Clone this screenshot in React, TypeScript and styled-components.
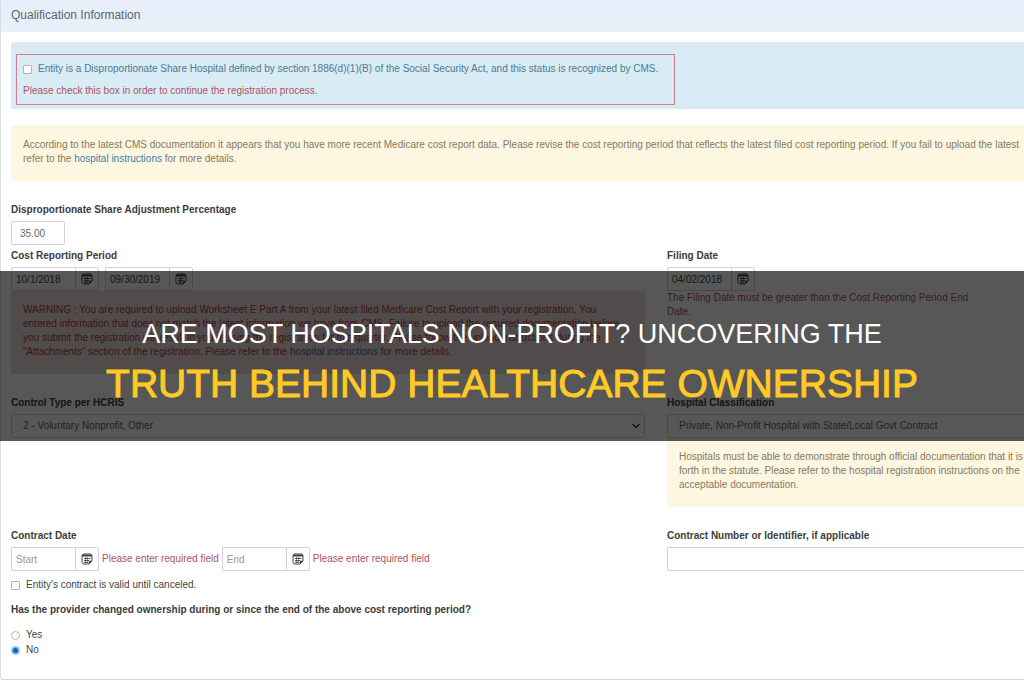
import React from 'react';
import styled, { createGlobalStyle } from 'styled-components';

const GlobalStyle = createGlobalStyle`
  *, *::before, *::after { box-sizing: border-box; }
  body {
    margin: 0;
    background: #fff;
    color: #444;
    font: 10px/14px "Liberation Sans", Arial, sans-serif;
  }
  input, select, button { font: inherit; margin: 0; }
`;

const Page = styled.div`
  position: relative;
  overflow: hidden;
`;

const Panel = styled.section`
  border-left: 1px solid #dcdfe2;
  border-bottom: 1px solid #d8d8d8;
  border-bottom-left-radius: 3px;
`;

const PanelHeader = styled.h1`
  margin: 0;
  padding: 7px 10px 9px;
  background: linear-gradient(#e7eefa, #e7f1f9);
  color: #5b6572;
  font-size: 12px;
  font-weight: 400;
  line-height: 16px;
`;

const PanelBody = styled.form`
  display: flex;
  flex-direction: column;
  padding: 10px 0 22px 10px;
`;

const InfoBox = styled.div`
  padding: 12px 5px 4px;
  background: #d9ebf5;
  border-radius: 2px 0 0 2px;
`;

const RequiredFrame = styled.div`
  display: inline-flex;
  flex-direction: column;
  gap: 8px;
  padding: 7px 16px 6px 6px;
  border: 1px solid #cf7f8b;
  vertical-align: top;
`;

const tones = {
  warning: { background: '#fdf6e1', color: '#857a5f' },
  danger: { background: '#f0dcdc', color: '#a94442' },
};

const Notice = styled.p<{ $tone: keyof typeof tones }>`
  margin: 0;
  padding: 12px 12px 15px;
  overflow: hidden;
  white-space: nowrap;
  border-radius: 2px;
  background: ${({ $tone }) => tones[$tone].background};
  color: ${({ $tone }) => tones[$tone].color};
`;

const PageNotice = styled(Notice)`
  margin: 16px 0 22px;
  padding-top: 13px;
`;

const Link = styled.a`
  color: #3d7ea6;
  text-decoration: none;
`;

const DangerLink = styled(Link)`
  color: #2b6fb0;
`;

const ErrorText = styled.span`
  color: #ab5560;
`;

const FieldError = styled(ErrorText)`
  max-width: 320px;
`;

const Columns = styled.div`
  display: grid;
  grid-template-columns: minmax(0, 634fr) minmax(0, 357fr);
  column-gap: 22px;
  margin-bottom: 22px;
`;

const LastColumns = styled(Columns)`
  margin-bottom: 11px;
`;

const Column = styled.div`
  display: flex;
  flex-direction: column;
`;

const Label = styled.label`
  margin-bottom: 4px;
  color: #3c3c3c;
  font-weight: 700;
`;

const TextInput = styled.input`
  height: 24px;
  padding: 0 8px;
  border: 1px solid #d2d2d2;
  border-radius: 2px;
  background: #fff;
  color: #666;
  &::placeholder { color: #999; opacity: 1; }
`;

const PercentInput = styled(TextInput)`
  width: 54px;
  margin-bottom: 4px;
`;

const OpenTextInput = styled(TextInput)`
  border-right: 0;
  border-radius: 2px 0 0 2px;
`;

const DateRow = styled.div<{ $gap: number }>`
  display: flex;
  align-items: center;
  gap: ${({ $gap }) => $gap}px;
`;

const DateGroup = styled.span`
  display: flex;
`;

const DateInput = styled(TextInput)`
  width: 64px;
  padding: 0 4px;
  border-right: 0;
  border-radius: 2px 0 0 2px;
  color: #444;
`;

const DateButton = styled.button`
  display: flex;
  align-items: center;
  justify-content: center;
  width: 24px;
  height: 24px;
  padding: 0;
  border: 1px solid #d2d2d2;
  border-radius: 0 2px 2px 0;
  background: #fff;
  color: #444;
`;

const SelectWrap = styled.div`
  position: relative;
  display: flex;
`;

const Select = styled.select<{ $open?: boolean }>`
  appearance: none;
  flex: 1;
  min-width: 0;
  height: 24px;
  padding: 0 11px;
  border: 1px solid #d2d2d2;
  border-right-width: ${({ $open }) => ($open ? 0 : 1)}px;
  border-radius: 2px;
  background: #fff;
  color: #666;
`;

const Chevron = styled.svg`
  position: absolute;
  top: 8px;
  right: 4px;
  pointer-events: none;
`;

const Choice = styled.label`
  display: flex;
  align-items: center;
  gap: 6px;
`;

const InfoChoice = styled(Choice)`
  color: #4a7b90;
`;

const ContractChoice = styled(Choice)`
  margin-top: 7px;
`;

const Tick = styled.input`
  appearance: none;
  width: 9px;
  height: 9px;
  border: 1px solid #b5b5b5;
  border-radius: 1px;
  background: #fff;
`;

const Radio = styled(Tick)`
  border-radius: 50%;
  &:checked {
    border-color: #7fb2f0;
    background: radial-gradient(circle, #0b62d6 0 2px, #fff 4px);
  }
`;

const Question = styled.fieldset`
  display: flex;
  flex-direction: column;
  gap: 1px;
  margin: 0;
  padding: 0;
  border: 0;
`;

const Legend = styled.legend`
  margin-bottom: 11px;
  padding: 0;
  color: #3c3c3c;
  font-weight: 700;
`;

const Banner = styled.div`
  position: absolute;
  top: 271px;
  left: 0;
  right: 0;
  padding: 47px 0 33px;
  background: rgba(0, 0, 0, 0.66);
  text-align: center;
  white-space: nowrap;
`;

const BannerTitle = styled.h2`
  margin: 0;
  color: #fff;
  font-size: 27px;
  font-weight: 400;
  line-height: 32px;
`;

const BannerSubtitle = styled.p`
  margin: 10px 0 0;
  color: #ffc926;
  font-size: 39px;
  line-height: 48px;
  -webkit-text-stroke: 1px #ffc926;
`;

const CalendarIcon = () => (
  <svg width="12" height="12" viewBox="0 0 12 12" fill="none" stroke="currentColor" aria-hidden="true">
    <path d="M1 3.2C1 1.9 1.7 1 3 1h6c1.300 0 2 .9 2 2.200V8l-3 3H3c-1.300 0-2-.8-2-2z" />
    <path d="M1 2.500h10" strokeWidth="2" />
    <path d="M3 5.500h6.500M3 7.500h5M3 9.400h3.500" strokeWidth=".9" />
    <path d="M4.500 4v6M6.500 4v6" strokeWidth=".6" />
    <path d="M8 11V8h3z" fill="currentColor" strokeWidth=".5" />
  </svg>
);

interface DateFieldProps {
  id?: string;
  name: string;
  value?: string;
  placeholder?: string;
}

const DateField = ({ id, name, value, placeholder }: DateFieldProps) => (
  <DateGroup>
    <DateInput id={id} type="text" aria-label={name} defaultValue={value} placeholder={placeholder} />
    <DateButton type="button" aria-label={`Choose ${name}`}>
      <CalendarIcon />
    </DateButton>
  </DateGroup>
);

export default function App() {
  return (
    <Page>
      <GlobalStyle />
      <Panel>
        <PanelHeader>Qualification Information</PanelHeader>
        <PanelBody>
          <InfoBox>
            <RequiredFrame>
              <InfoChoice>
                <Tick type="checkbox" />
                Entity is a Disproportionate Share Hospital defined by section 1886(d)(1)(B) of the Social
                Security Act, and this status is recognized by CMS.
              </InfoChoice>
              <ErrorText>Please check this box in order to continue the registration process.</ErrorText>
            </RequiredFrame>
          </InfoBox>

          <PageNotice $tone="warning">
            According to the latest CMS documentation it appears that you have more recent Medicare cost report
            data. Please revise the cost reporting period that reflects the latest filed cost reporting period. If
            you fail to upload the latest
            <br />
            refer to the <Link href="#instructions">hospital instructions</Link> for more details.
          </PageNotice>

          <Label htmlFor="percentage">Disproportionate Share Adjustment Percentage</Label>
          <PercentInput id="percentage" type="text" defaultValue="35.00" />

          <Columns>
            <Column>
              <Label htmlFor="period-start">Cost Reporting Period</Label>
              <DateRow $gap={6}>
                <DateField id="period-start" name="period start" value="10/1/2018" />
                <DateField name="period end" value="09/30/2019" />
              </DateRow>
              <Notice $tone="danger">
                WARNING : You are required to upload Worksheet E Part A from your latest filed Medicare Cost
                Report with your registration. You
                <br />
                entered information that does not match the latest information we have from CMS. Failure to upload
                the required documentation before
                <br />
                you submit the registration will result in you missing the registration for this quarter. Please
                follow the upload instructions during the
                <br />
                “Attachments” section of the registration. Please refer to the{' '}
                <DangerLink href="#instructions">hospital instructions</DangerLink> for more details.
              </Notice>
            </Column>
            <Column>
              <Label htmlFor="filing-date">Filing Date</Label>
              <DateField id="filing-date" name="filing date" value="04/02/2018" />
              <FieldError>The Filing Date must be greater than the Cost Reporting Period End Date.</FieldError>
            </Column>
          </Columns>

          <Columns>
            <Column>
              <Label htmlFor="control-type">Control Type per HCRIS</Label>
              <SelectWrap>
                <Select id="control-type">
                  <option>2 - Voluntary Nonprofit, Other</option>
                </Select>
                <Chevron width="10" height="8" viewBox="0 0 10 8" fill="none" stroke="#333" strokeWidth="1.300">
                  <path d="M1.500 2 5 5.500 8.500 2" />
                </Chevron>
              </SelectWrap>
            </Column>
            <Column>
              <Label htmlFor="classification">Hospital Classification</Label>
              <SelectWrap>
                <Select id="classification" $open>
                  <option>Private, Non-Profit Hospital with State/Local Govt Contract</option>
                </Select>
              </SelectWrap>
              <Notice $tone="warning">
                Hospitals must be able to demonstrate through official documentation that it is
                <br />
                forth in the statute. Please refer to the hospital registration instructions on the
                <br />
                acceptable documentation.
              </Notice>
            </Column>
          </Columns>

          <LastColumns>
            <Column>
              <Label htmlFor="contract-start">Contract Date</Label>
              <DateRow $gap={3}>
                <DateField id="contract-start" name="contract start" placeholder="Start" />
                <ErrorText>Please enter required field</ErrorText>
                <DateField name="contract end" placeholder="End" />
                <ErrorText>Please enter required field</ErrorText>
              </DateRow>
              <ContractChoice>
                <Tick type="checkbox" />
                Entity's contract is valid until canceled.
              </ContractChoice>
            </Column>
            <Column>
              <Label htmlFor="contract-number">Contract Number or Identifier, if applicable</Label>
              <OpenTextInput id="contract-number" type="text" />
            </Column>
          </LastColumns>

          <Question>
            <Legend>Has the provider changed ownership during or since the end of the above cost reporting period?</Legend>
            <Choice>
              <Radio type="radio" name="ownership" />
              Yes
            </Choice>
            <Choice>
              <Radio type="radio" name="ownership" defaultChecked />
              No
            </Choice>
          </Question>
        </PanelBody>
      </Panel>
      <Banner>
        <BannerTitle>ARE MOST HOSPITALS NON-PROFIT? UNCOVERING THE</BannerTitle>
        <BannerSubtitle>TRUTH BEHIND HEALTHCARE OWNERSHIP</BannerSubtitle>
      </Banner>
    </Page>
  );
}
